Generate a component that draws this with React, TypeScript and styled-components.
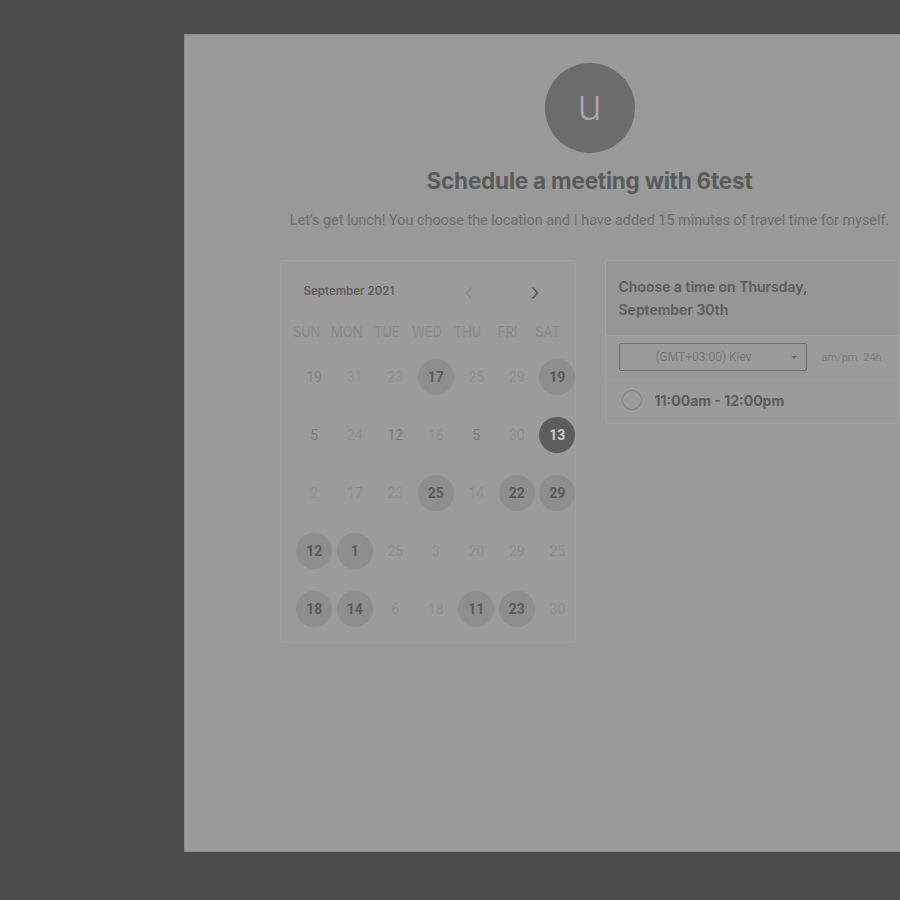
import React from "react";
import styled, { createGlobalStyle } from "styled-components";

const Global = createGlobalStyle`
  html, body { margin: 0; padding: 0; }
  body {
    background: #4b4b4b;
    width: 900px;
    height: 900px;
    overflow: hidden;
    font-family: "Roboto", "Liberation Sans", sans-serif;
  }
`;

const Stage = styled.div`
  padding: 34px 0 0 184px;
  width: 900px;
  height: 900px;
  box-sizing: border-box;
  overflow: hidden;
`;

const Panel = styled.main`
  width: 810px;
  height: 818px;
  box-sizing: border-box;
  background: #999999;
  border-top: 1px solid #8f8f8f;
  border-left: 1px solid #8f8f8f;
  border-bottom: 1px solid #8c8c8c;
  display: flex;
  flex-direction: column;
  align-items: center;
  padding-top: 28px;
`;

const Avatar = styled.div`
  width: 90px;
  height: 90px;
  border-radius: 50%;
  background: #6c6c6c;
  color: #a9a9a9;
  display: flex;
  align-items: center;
  justify-content: center;
  font-family: "Roboto", sans-serif;
  font-weight: 300;
  font-size: 44px;
  line-height: 1;
  padding-bottom: 6px;
  box-sizing: border-box;
`;

const Title = styled.h1`
  margin: 15px 0 0;
  font-family: "Inter", sans-serif;
  font-weight: 700;
  font-size: 22.5px;
  line-height: 26px;
  color: #5b5b5b;
  letter-spacing: -0.2px;
`;

const Subtitle = styled.p`
  margin: 17px 0 0;
  font-family: "Roboto", sans-serif;
  font-size: 14.4px;
  line-height: 20px;
  color: #6d6d6d;
`;

const Cards = styled.div`
  margin-top: 29px;
  display: flex;
  align-items: flex-start;
  gap: 29px;
  width: 620px;
`;

const CalendarCard = styled.section`
  width: 296px;
  box-sizing: border-box;
  background: #9b9b9b;
  border: 1px solid #a1a1a1;
  border-radius: 2px;
  padding-bottom: 15px;
`;

const CalHeader = styled.div`
  display: flex;
  align-items: center;
  height: 20px;
  padding: 20px 0 0 23px;
`;

const MonthLabel = styled.span`
  flex: 0 0 159px;
  font-family: "Inter", sans-serif;
  font-weight: 600;
  font-size: 11.5px;
  color: #5e5e5e;
`;

const NavButton = styled.span<{ $dim?: boolean }>`
  flex: 0 0 12px;
  display: flex;
  align-items: center;
  justify-content: center;
  height: 20px;
  margin-right: 54px;
  color: ${(p) => (p.$dim ? "#8b8b8b" : "#555555")};
  padding-top: 4px;
`;

const WeekRow = styled.div`
  display: grid;
  grid-template-columns: repeat(7, 40.2px);
  padding: 21px 0 0 6px;
  height: 20px;
`;

const WeekDay = styled.span`
  text-align: center;
  font-family: "Roboto", sans-serif;
  font-size: 14px;
  line-height: 20px;
  color: #8a8a8a;
`;

const DaysGrid = styled.div`
  display: grid;
  grid-template-columns: repeat(7, 40.5px);
  row-gap: 22px;
  padding: 17px 0 0 13.5px;
`;

type Kind = "faded" | "light" | "medium" | "avail" | "selected";

const Day = styled.span<{ $kind: Kind }>`
  justify-self: center;
  width: 36px;
  height: 36px;
  border-radius: 50%;
  display: flex;
  align-items: center;
  justify-content: center;
  font-family: "Roboto", sans-serif;
  font-size: 14px;
  font-weight: ${(p) => (p.$kind === "avail" || p.$kind === "selected" ? 700 : 400)};
  background: ${(p) =>
    p.$kind === "avail" ? "#8e8e8e" : p.$kind === "selected" ? "#5d5d5d" : "transparent"};
  color: ${(p) =>
    ({
      faded: "#8e8e8e",
      light: "#838383",
      medium: "#7a7a7a",
      avail: "#5a5a5a",
      selected: "#cdcdcd",
    })[p.$kind]};
`;

const TimeCard = styled.section`
  flex: 1;
  box-sizing: border-box;
  background: #9a9a9a;
  border: 1px solid #a1a1a1;
  border-radius: 2px;
`;

const TimeHeader = styled.div`
  background: #969696;
  padding: 14px 14px 14px 13px;
  font-family: "Inter", sans-serif;
  font-weight: 600;
  font-size: 14px;
  line-height: 23px;
  color: #5c5c5c;
  border-bottom: 1px solid #9e9e9e;
`;

const OptionsRow = styled.div`
  display: flex;
  align-items: center;
  padding: 7px 0 8px 13px;
  border-bottom: 1px solid #9e9e9e;
`;

const ZoneSelect = styled.div`
  position: relative;
  width: 188px;
  height: 28px;
  box-sizing: border-box;
  border: 1px solid #6e6e6e;
  border-radius: 2px;
  display: flex;
  align-items: center;
  padding-left: 36px;
  font-family: "Roboto", sans-serif;
  font-size: 12px;
  color: #777777;
`;

const Caret = styled.span`
  position: absolute;
  right: 9px;
  top: 12px;
  width: 0;
  height: 0;
  border-left: 3px solid transparent;
  border-right: 3px solid transparent;
  border-top: 3px solid #666666;
`;

const Format = styled.span`
  margin-left: 15px;
  font-family: "Roboto", sans-serif;
  font-size: 11px;
  color: #7b7b7b;
  word-spacing: 3px;
`;

const Slot = styled.div`
  display: flex;
  align-items: center;
  gap: 13px;
  padding: 10px 0 13px 16px;
`;

const Radio = styled.span`
  width: 20px;
  height: 20px;
  box-sizing: border-box;
  border: 1.5px solid #7e7e7e;
  border-radius: 50%;
`;

const SlotLabel = styled.span`
  font-family: "Inter", sans-serif;
  font-weight: 700;
  font-size: 14px;
  color: #5c5c5c;
`;

const weekdays = ["SUN", "MON", "TUE", "WED", "THU", "FRI", "SAT"];

const days: [string, Kind][][] = [
  [["19", "light"], ["31", "faded"], ["23", "faded"], ["17", "avail"], ["25", "faded"], ["29", "faded"], ["19", "avail"]],
  [["5", "medium"], ["24", "faded"], ["12", "medium"], ["16", "faded"], ["5", "medium"], ["30", "faded"], ["13", "selected"]],
  [["2", "faded"], ["17", "faded"], ["23", "faded"], ["25", "avail"], ["14", "faded"], ["22", "avail"], ["29", "avail"]],
  [["12", "avail"], ["1", "avail"], ["25", "faded"], ["3", "faded"], ["20", "faded"], ["29", "faded"], ["25", "faded"]],
  [["18", "avail"], ["14", "avail"], ["6", "faded"], ["18", "faded"], ["11", "avail"], ["23", "avail"], ["30", "faded"]],
];

const Chevron = ({ dir }: { dir: "left" | "right" }) => (
  <svg width="8" height="12" viewBox="0 0 8 12" fill="none">
    <path
      d={dir === "left" ? "M6 1 L1.5 6 L6 11" : "M2 1 L6.5 6 L2 11"}
      stroke="currentColor"
      strokeWidth="1.6"
      strokeLinecap="round"
      strokeLinejoin="round"
    />
  </svg>
);

export default function App() {
  return (
    <>
      <Global />
      <Stage>
        <Panel>
          <Avatar>u</Avatar>
          <Title>Schedule a meeting with 6test</Title>
          <Subtitle>
            Let’s get lunch! You choose the location and I have added 15 minutes of travel time for myself.
          </Subtitle>
          <Cards>
            <CalendarCard>
              <CalHeader>
                <MonthLabel>September 2021</MonthLabel>
                <NavButton $dim>
                  <Chevron dir="left" />
                </NavButton>
                <NavButton>
                  <Chevron dir="right" />
                </NavButton>
              </CalHeader>
              <WeekRow>
                {weekdays.map((w) => (
                  <WeekDay key={w}>{w}</WeekDay>
                ))}
              </WeekRow>
              <DaysGrid>
                {days.flat().map(([d, k], i) => (
                  <Day key={i} $kind={k}>
                    {d}
                  </Day>
                ))}
              </DaysGrid>
            </CalendarCard>
            <TimeCard>
              <TimeHeader>
                Choose a time on Thursday,
                <br />
                September 30th
              </TimeHeader>
              <OptionsRow>
                <ZoneSelect>
                  (GMT+03:00) Kiev
                  <Caret />
                </ZoneSelect>
                <Format>am/pm 24h</Format>
              </OptionsRow>
              <Slot>
                <Radio />
                <SlotLabel>11:00am - 12:00pm</SlotLabel>
              </Slot>
            </TimeCard>
          </Cards>
        </Panel>
      </Stage>
    </>
  );
}
